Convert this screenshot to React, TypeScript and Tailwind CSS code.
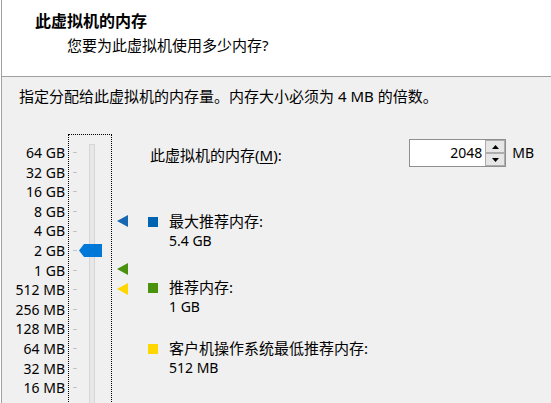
import React from 'react';

const sizes = ['64 GB', '32 GB', '16 GB', '8 GB', '4 GB', '2 GB', '1 GB', '512 MB', '256 MB', '128 MB', '64 MB', '32 MB', '16 MB'];

function Marker({ color, top }: { color: string; top: string }) {
  return (
    <svg className={`absolute left-[5px] ${top}`} width="11" height="12" viewBox="0 0 11 12">
      <polygon points="0,6 11,0 11,12" fill={color} />
    </svg>
  );
}

function LegendItem({ color, label, value, className }: { color: string; label: string; value: string; className: string }) {
  return (
    <div className={`flex items-start ${className}`}>
      <span className={`w-[10px] h-[10px] mt-[5px] ${color}`} />
      <div className="ml-[11px] leading-[19px]">
        <div className="text-[15px]">{label}</div>
        <div className="text-[14px]">{value}</div>
      </div>
    </div>
  );
}

export default function App() {
  return (
    <div className="w-[551px] h-[403px] overflow-hidden bg-white pl-px text-black font-['Noto_Sans','Noto_Sans_CJK_SC',sans-serif]">
      <div className="h-full flex flex-col border-l border-[#a0a0a0]">
        {/* header */}
        <div className="h-[77px] shrink-0 bg-white border-b border-[#a0a0a0]">
          <div className="pl-[33px] pt-[11px] leading-[20px] text-[16px] font-bold">此虚拟机的内存</div>
          <div className="pl-[65px] mt-[4px] leading-[20px] text-[15px]">您要为此虚拟机使用多少内存?</div>
        </div>

        {/* body */}
        <div className="flex-1 bg-[#f0f0f0] pt-[9px]">
          <div className="pl-[17px] leading-[20px] text-[15px]">指定分配给此虚拟机的内存量。内存大小必须为 4 MB 的倍数。</div>

          <div className="mt-[28px] flex items-start">
            {/* size labels */}
            <div className="w-[63px] pt-[9px] flex flex-col text-right text-[14px]">
              {sizes.map((s) => (
                <div key={s} className="h-[19.6px] leading-[19.6px]">{s}</div>
              ))}
            </div>

            {/* slider */}
            <div className="relative ml-[3px] w-[44px] h-[300px] border border-dotted border-black">
              <div className="pt-[8px] flex flex-col">
                {sizes.map((s) => (
                  <div key={s} className="h-[19.6px] flex items-center pl-[4px]">
                    <span className="w-[4px] h-px bg-[#c4c4c4]" />
                  </div>
                ))}
              </div>
              <div className="absolute left-[20px] top-[9px] w-[6px] h-[300px] bg-[#e7e7e7] border border-[#d6d6d6]" />
              <svg className="absolute left-[10px] top-[109px]" width="23" height="13" viewBox="0 0 23 13">
                <polygon points="0,6.5 5,0 23,0 23,13 5,13" fill="#0078d7" />
              </svg>
            </div>

            {/* recommendation markers */}
            <div className="relative w-[36px] h-[270px]">
              <Marker color="#1766b0" top="top-[81px]" />
              <Marker color="#4a920e" top="top-[129px]" />
              <Marker color="#ffd700" top="top-[149px]" />
            </div>

            {/* right column */}
            <div className="flex-1">
              <div className="mt-[5px] h-[28px] flex items-start">
                <div className="pl-[2px] mt-[6px] leading-[20px] text-[15px]">
                  此虚拟机的内存(<span className="underline underline-offset-2">M</span>):
                </div>
                <div className="ml-auto flex items-start">
                  <div className="w-[97px] h-[28px] flex bg-white border border-[#8f8f8f]">
                    <div className="flex-1 pr-[3px] text-right text-[14px] leading-[26px]">2048</div>
                    <div className="w-[20px] flex flex-col">
                      <div className="h-[13px] flex items-center justify-center bg-[#e6e6e6] border border-[#adadad]">
                        <svg width="7" height="4" viewBox="0 0 7 4"><polygon points="0,4 3.5,0 7,4" fill="#000" /></svg>
                      </div>
                      <div className="h-[13px] flex items-center justify-center bg-[#e6e6e6] border border-[#adadad]">
                        <svg width="7" height="4" viewBox="0 0 7 4"><polygon points="0,0 7,0 3.5,4" fill="#000" /></svg>
                      </div>
                    </div>
                  </div>
                  <div className="ml-[6px] mr-[17px] mt-[4px] leading-[20px] text-[14px]">MB</div>
                </div>
              </div>

              <LegendItem className="mt-[45px]" color="bg-[#0063b1]" label="最大推荐内存:" value="5.4 GB" />
              <LegendItem className="mt-[28px]" color="bg-[#4a920e]" label="推荐内存:" value="1 GB" />
              <LegendItem className="mt-[23px]" color="bg-[#ffd700]" label="客户机操作系统最低推荐内存:" value="512 MB" />
            </div>
          </div>
        </div>
      </div>
    </div>
  );
}
